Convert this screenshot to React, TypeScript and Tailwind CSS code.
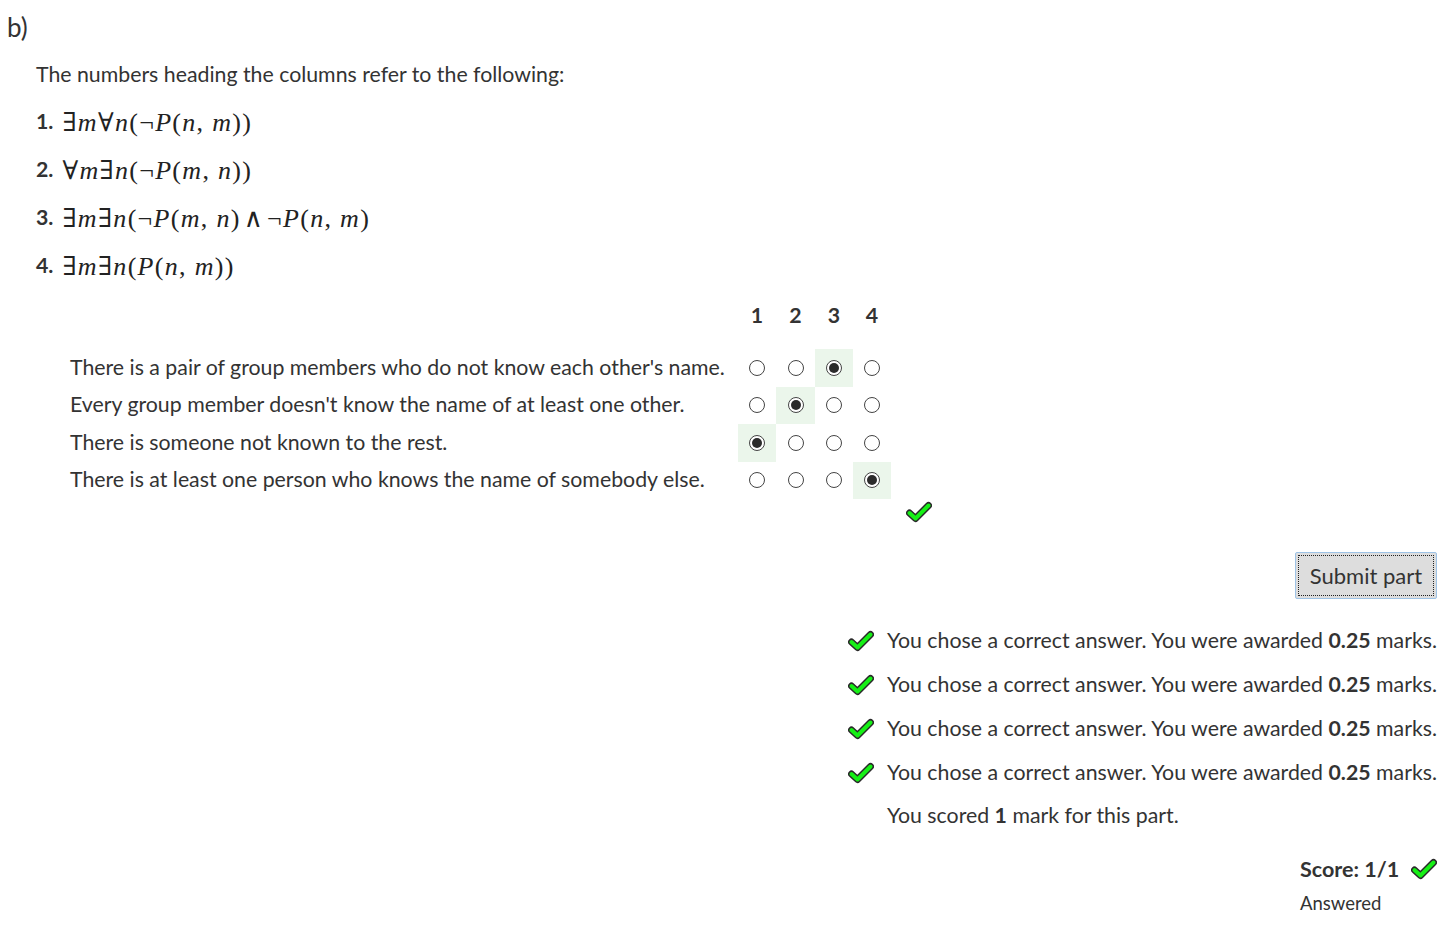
import React from "react";

const rows = [
  { label: "There is a pair of group members who do not know each other's name.", answer: 2 },
  { label: "Every group member doesn't know the name of at least one other.", answer: 1 },
  { label: "There is someone not known to the rest.", answer: 0 },
  { label: "There is at least one person who knows the name of somebody else.", answer: 3 },
];

function Tick({ className = "" }: { className?: string }) {
  return (
    <svg viewBox="0 0 26 22" className={className} width="26" height="22">
      <polyline points="3.5,12 9.5,17.5 22.5,4.5" fill="none" stroke="#2a2a2a" strokeWidth="7" strokeLinejoin="round" strokeLinecap="round" />
      <polyline points="3.5,12 9.5,17.5 22.5,4.5" fill="none" stroke="#16f016" strokeWidth="4" strokeLinejoin="round" strokeLinecap="round" />
    </svg>
  );
}

function Radio({ checked }: { checked: boolean }) {
  return (
    <span className="flex h-[16px] w-[16px] items-center justify-center rounded-full border border-[#444] bg-white">
      {checked && <span className="h-[10px] w-[10px] rounded-full bg-[#2b2b2b]" />}
    </span>
  );
}

const v = "italic";

function Formula({ n, children }: { n: number; children: React.ReactNode }) {
  return (
    <li className="flex h-[48px] items-center">
      <span className="mr-[9px] font-bold">{n}.</span>
      <span className="text-[26px] tracking-[1.3px] text-[#222]" style={{ fontFamily: '"Liberation Serif", "DejaVu Serif", serif' }}>
        {children}
      </span>
    </li>
  );
}

const feedback = [1, 2, 3, 4];

export default function App() {
  return (
    <div className="min-h-[928px] w-full bg-white text-[21.3px] text-[#333]" style={{ fontFamily: 'Lato, "Noto Sans", sans-serif' }}>
      <div className="pl-[7px] pt-[10px] text-[26px] leading-[34px]">b)</div>

      <div className="pl-[36px]">
        <p className="mt-[15px] leading-[30px]">The numbers heading the columns refer to the following:</p>

        <ol className="mt-[9px]">
          <Formula n={1}>
            ∃<i className={v}>m</i>∀<i className={v}>n</i>(¬<i className={v}>P</i>(<i className={v}>n</i>,<i className={v}> m</i>))
          </Formula>
          <Formula n={2}>
            ∀<i className={v}>m</i>∃<i className={v}>n</i>(¬<i className={v}>P</i>(<i className={v}>m</i>,<i className={v}> n</i>))
          </Formula>
          <Formula n={3}>
            ∃<i className={v}>m</i>∃<i className={v}>n</i>(¬<i className={v}>P</i>(<i className={v}>m</i>,<i className={v}> n</i>)<span className="mx-[3px]">∧</span>¬<i className={v}>P</i>(<i className={v}>n</i>,<i className={v}> m</i>)
          </Formula>
          <Formula n={4}>
            ∃<i className={v}>m</i>∃<i className={v}>n</i>(<i className={v}>P</i>(<i className={v}>n</i>,<i className={v}> m</i>))
          </Formula>
        </ol>
      </div>

      <div className="ml-[70px] mt-[7px]">
        <div className="grid grid-cols-[668px_38px_39px_38px_38px]">
          <div className="h-[37px]" />
          {[1, 2, 3, 4].map((c) => (
            <div key={c} className="flex h-[37px] items-center justify-center font-bold">
              {c}
            </div>
          ))}
          <div className="col-span-5 h-[15px]" />
          {rows.map((r) => (
            <React.Fragment key={r.label}>
              <div className="flex h-[37.5px] items-center">{r.label}</div>
              {[0, 1, 2, 3].map((c) => (
                <div key={c} className={`flex h-[37.5px] items-center justify-center ${c === r.answer ? "bg-[#ebf6eb]" : ""}`}>
                  <Radio checked={c === r.answer} />
                </div>
              ))}
            </React.Fragment>
          ))}
        </div>
        <div className="ml-[836px] mt-[2px]">
          <Tick />
        </div>
      </div>

      <div className="mt-[29px] flex justify-end pr-[10px]">
        <button className="h-[47px] w-[142px] rounded-[2px] border border-[#9ec3e6] bg-[#dddddd] p-[2px] text-[22px] text-[#333]">
          <span className="flex h-full w-full items-center justify-center border border-dotted border-[#222]">Submit part</span>
        </button>
      </div>

      <div className="mt-[20px] flex justify-end pr-[10px]">
        <ul>
          {feedback.map((f) => (
            <li key={f} className="flex h-[44px] items-center">
              <Tick className="mr-[13px]" />
              <span>
                You chose a correct answer. You were awarded <b>0.25</b> marks.
              </span>
            </li>
          ))}
          <li className="flex h-[42px] items-center pl-[39px]">
            <span>
              You scored <b>1</b> mark for this part.
            </span>
          </li>
        </ul>
      </div>

      <div className="mt-[16px] flex justify-end pr-[10px]">
        <div className="w-[137px]">
          <div className="flex items-center justify-between">
            <span className="font-bold text-[21.5px]">Score: 1/1</span>
            <Tick />
          </div>
          <div className="mt-[5px] text-[18.5px]">Answered</div>
        </div>
      </div>
    </div>
  );
}
